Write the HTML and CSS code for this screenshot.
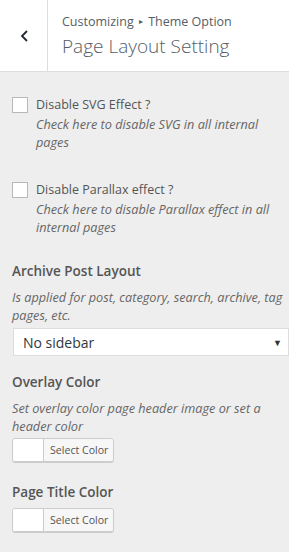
FILE: index.html
```html
<!DOCTYPE html>
<html>
<head>
<meta charset="utf-8">
<link rel="stylesheet" href="styles.css">
</head>
<body>
<div class="panel">
  <header class="head">
    <button class="back" aria-label="Back">
      <svg width="9" height="12" viewBox="0 0 9 12"><path d="M7 1 L2 6 L7 11" fill="none" stroke="#23282d" stroke-width="1.8"/></svg>
    </button>
    <div class="titles">
      <div class="crumb">Customizing <span class="arrow">▸</span> Theme Option</div>
      <div class="title">Page Layout Setting</div>
    </div>
  </header>
  <div class="body">
    <div class="check-ctl">
      <span class="box"></span>
      <div class="check-text">
        <div class="label">Disable SVG Effect ?</div>
        <div class="desc">Check here to disable SVG in all internal pages</div>
      </div>
    </div>
    <div class="check-ctl">
      <span class="box"></span>
      <div class="check-text">
        <div class="label">Disable Parallax effect ?</div>
        <div class="desc">Check here to disable Parallax effect in all internal pages</div>
      </div>
    </div>
    <div class="ctl">
      <div class="ctl-title">Archive Post Layout</div>
      <div class="desc">Is applied for post, category, search, archive, tag pages, etc.</div>
      <div class="select"><span>No sidebar</span><span class="caret">▼</span></div>
    </div>
    <div class="ctl">
      <div class="ctl-title">Overlay Color</div>
      <div class="desc">Set overlay color page header image or set a header color</div>
      <div class="color"><span class="swatch"></span><span class="pick">Select Color</span></div>
    </div>
    <div class="ctl">
      <div class="ctl-title">Page Title Color</div>
      <div class="color"><span class="swatch"></span><span class="pick">Select Color</span></div>
    </div>
  </div>
</div>
</body>
</html>
```
FILE: styles.css
```css
html, body { margin: 0; padding: 0; }
body {
  background: #eeeeee;
  font-family: "Open Sans", "Noto Sans", sans-serif;
  color: #555d66;
  width: 289px;
  overflow: hidden;
}
.head {
  display: flex;
  height: 71px;
  background: #fff;
  border-bottom: 1px solid #dddddd;
}
.back {
  width: 48px;
  border: 0;
  border-right: 1px solid #dddddd;
  background: #fff;
  padding: 0 0 0 1px;
  display: flex;
  align-items: center;
  justify-content: center;
}
.titles {
  padding: 12px 0 0 14px;
}
.crumb {
  font-size: 12.5px;
  line-height: 18px;
  color: #555d66;
}
.arrow { font-size: 8px; vertical-align: 2px; padding: 0 2px; }
.title {
  font-size: 19px;
  font-weight: 300;
  line-height: 28px;
  margin-top: 1px;
  color: #555d66;
}
.body {
  padding: 24px 0 0 12px;
}
.check-ctl {
  display: flex;
  gap: 8px;
  margin-bottom: 30px;
}
.box {
  flex: none;
  width: 14px;
  height: 14px;
  background: #fff;
  border: 1px solid #b4b9be;
  margin-top: 1px;
}
.label {
  font-size: 12.5px;
  line-height: 18px;
  margin-bottom: 1px;
  color: #555;
}
.desc {
  font-size: 12.7px;
  font-style: italic;
  line-height: 18px;
  color: #666;
}
.ctl { margin-bottom: 16px; }
.check-ctl + .ctl { margin-top: -5px; }
.ctl-title {
  font-size: 13.5px;
  font-weight: 600;
  line-height: 20px;
  margin-bottom: 7px;
  color: #555;
}
.select {
  margin: 4px 0 0 1px;
  height: 26px;
  background: #fff;
  border: 1px solid #dddddd;
  display: flex;
  align-items: center;
  justify-content: space-between;
  padding: 0 6px 0 9px;
  font-size: 14px;
  color: #32373c;
}
.caret { font-size: 9px; color: #333; }
.color {
  margin-top: 3px;
  display: inline-flex;
  height: 22px;
  border: 1px solid #ccc;
  border-radius: 3px;
  overflow: hidden;
  box-shadow: 0 1px 0 #ccc;
}
.ctl-title + .color { margin-top: -1px; }
.swatch { width: 30px; background: #fff; border-right: 1px solid #ccc; }
.pick {
  background: #f7f7f7;
  font-size: 10.6px;
  line-height: 22px;
  padding: 0 5px 0 6px;
  color: #555;
}
```
